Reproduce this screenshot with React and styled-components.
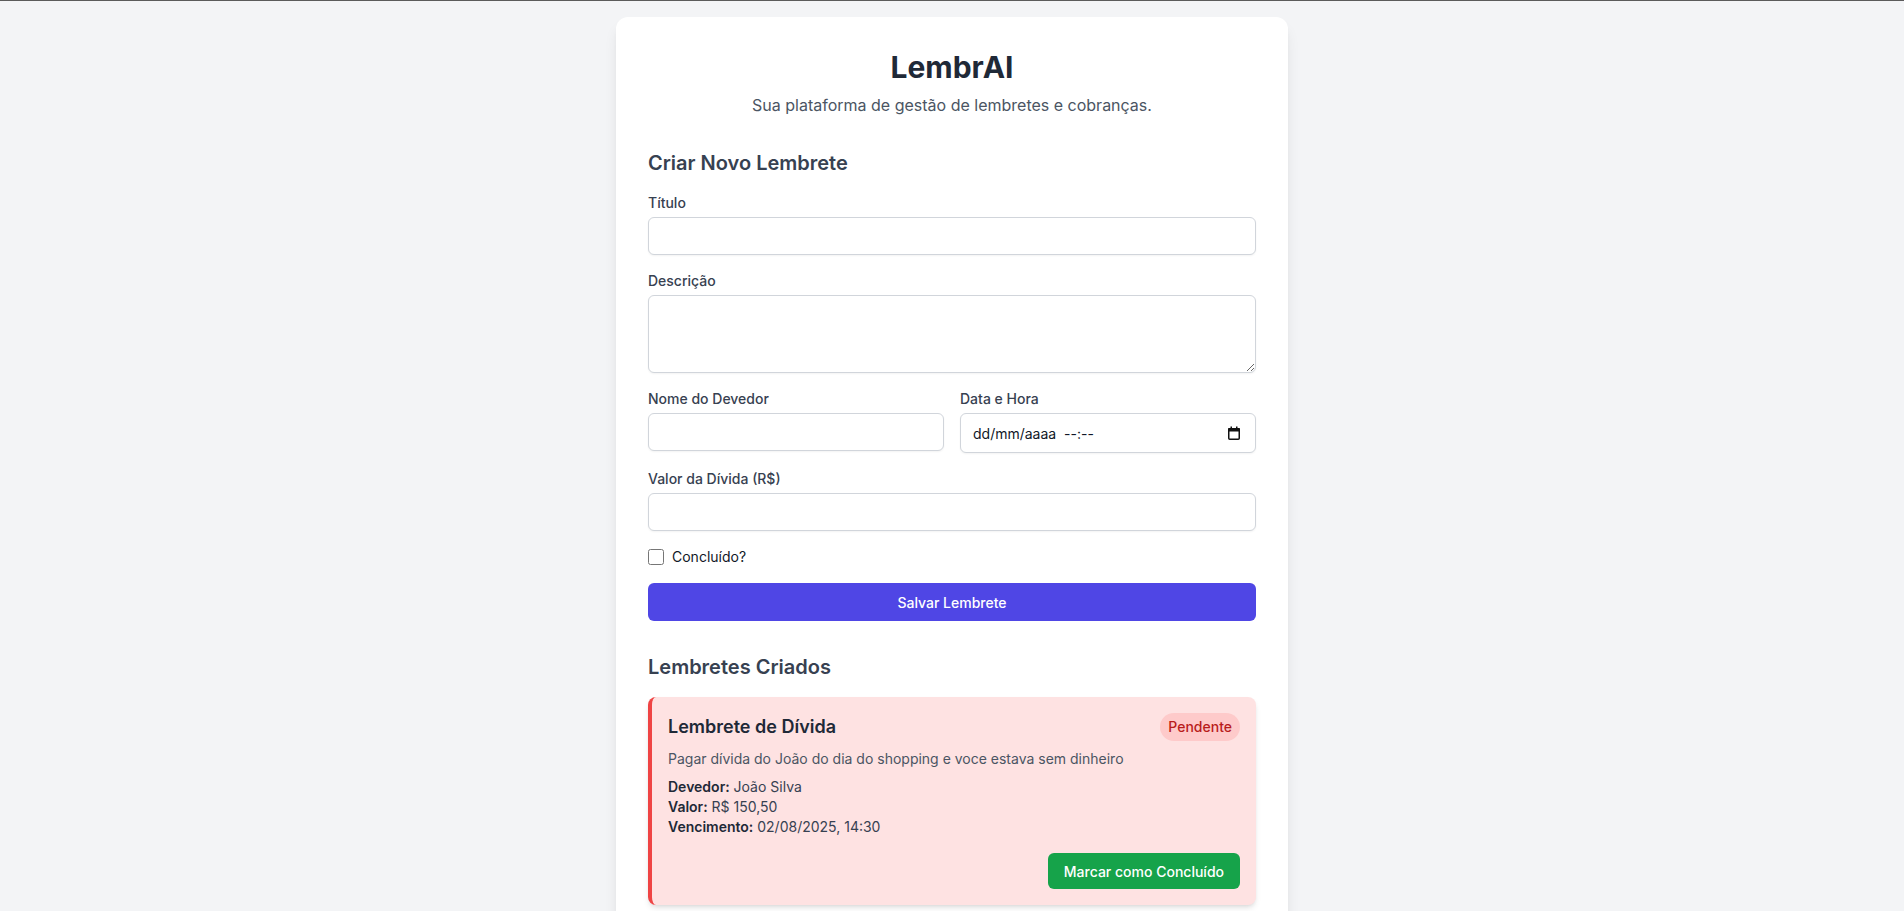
import { useState } from "react";
import styled, { createGlobalStyle } from "styled-components";

const GlobalStyle = createGlobalStyle`
  * {
    box-sizing: border-box;
  }
  body {
    margin: 0;
    background-color: #f3f4f6;
    border-top: 1px solid #5b5b5b;
    font-family: Inter, "Noto Sans", sans-serif;
    color: #1f2937;
  }
`;

const Page = styled.div`
  min-height: 910px;
  padding: 16px 16px 32px;
`;

const Card = styled.main`
  max-width: 672px;
  margin: 0 auto;
  background-color: #ffffff;
  padding: 32px;
  border-radius: 12px;
  box-shadow: 0 10px 15px -3px rgba(0, 0, 0, 0.1),
    0 4px 6px -4px rgba(0, 0, 0, 0.1);
`;

const Header = styled.header`
  text-align: center;
  margin-bottom: 32px;
`;

const Title = styled.h1`
  margin: 0 0 8px;
  font-size: 30px;
  line-height: 36px;
  font-weight: 700;
  color: #1f2937;
`;

const Subtitle = styled.p`
  margin: 0;
  font-size: 16px;
  line-height: 24px;
  color: #4b5563;
`;

const SectionTitle = styled.h2`
  margin: 0 0 16px;
  font-size: 20px;
  line-height: 28px;
  font-weight: 600;
  color: #374151;
`;

const Form = styled.form`
  display: flex;
  flex-direction: column;
  gap: 16px;
  margin-bottom: 32px;
`;

const Field = styled.div`
  display: flex;
  flex-direction: column;
`;

const Label = styled.label`
  display: block;
  font-size: 14px;
  line-height: 20px;
  font-weight: 500;
  color: #374151;
  margin-bottom: 4px;
`;

const TwoCols = styled.div`
  display: grid;
  grid-template-columns: 1fr 1fr;
  gap: 16px;
  align-items: start;
`;

const Input = styled.input`
  width: 100%;
  height: ${(p) => (p.$tall ? "40px" : "38px")};
  padding: 8px 12px;
  font-family: inherit;
  font-size: 14px;
  line-height: 20px;
  color: #111827;
  background: #ffffff;
  border: 1px solid #d1d5db;
  border-radius: 6px;
  box-shadow: 0 1px 2px 0 rgba(0, 0, 0, 0.05);
  outline: none;
`;

const TextArea = styled.textarea`
  width: 100%;
  height: 78px;
  padding: 8px 12px;
  font-family: inherit;
  font-size: 14px;
  line-height: 20px;
  border: 1px solid #d1d5db;
  border-radius: 6px;
  box-shadow: 0 1px 2px 0 rgba(0, 0, 0, 0.05);
  outline: none;
  display: block;
`;

const DateWrap = styled.div`
  position: relative;
`;

const CalendarIcon = styled.svg`
  position: absolute;
  right: 16px;
  top: 13px;
  pointer-events: none;
`;

const CheckRow = styled.div`
  display: flex;
  align-items: center;
  height: 20px;
`;

const Checkbox = styled.input`
  width: 16px;
  height: 16px;
  margin: 0;
`;

const CheckLabel = styled.label`
  margin-left: 8px;
  font-size: 14px;
  line-height: 20px;
  color: #111827;
`;

const Button = styled.button`
  display: flex;
  justify-content: center;
  align-items: center;
  height: ${(p) => (p.$full ? "38px" : "36px")};
  width: ${(p) => (p.$full ? "100%" : "auto")};
  padding: 0 16px;
  border: none;
  border-radius: 6px;
  font-family: inherit;
  font-size: 14px;
  font-weight: 500;
  color: #ffffff;
  background-color: ${(p) => p.$color};
  cursor: pointer;
`;

const ReminderCard = styled.div`
  background-color: #fee2e2;
  border-left: 4px solid #ef4444;
  border-radius: 8px;
  padding: 16px;
  box-shadow: 0 4px 6px -1px rgba(0, 0, 0, 0.1),
    0 2px 4px -2px rgba(0, 0, 0, 0.1);
`;

const ReminderHead = styled.div`
  display: flex;
  justify-content: space-between;
  align-items: center;
`;

const ReminderTitle = styled.h3`
  margin: 0;
  font-size: 18px;
  line-height: 28px;
  font-weight: 600;
  color: #1f2937;
`;

const Badge = styled.span`
  padding: 4px 8px;
  border-radius: 9999px;
  font-size: 14px;
  line-height: 20px;
  font-weight: 500;
  background-color: #fecaca;
  color: #b91c1c;
`;

const Description = styled.p`
  margin: 8px 0 0;
  font-size: 14px;
  line-height: 20px;
  color: #4b5563;
`;

const Details = styled.div`
  margin-top: 8px;
  font-size: 14px;
  line-height: 20px;
  color: #374151;
`;

const DetailLine = styled.p`
  margin: 0;

  strong {
    font-weight: 600;
    color: #1f2937;
  }
`;

const Actions = styled.div`
  display: flex;
  justify-content: flex-end;
  margin-top: 16px;
`;

const App = () => {
  const [done, setDone] = useState(false);

  return (
    <>
      <GlobalStyle />
      <Page>
        <Card>
          <Header>
            <Title>LembrAI</Title>
            <Subtitle>Sua plataforma de gestão de lembretes e cobranças.</Subtitle>
          </Header>

          <SectionTitle>Criar Novo Lembrete</SectionTitle>
          <Form onSubmit={(e) => e.preventDefault()}>
            <Field>
              <Label htmlFor="titulo">Título</Label>
              <Input id="titulo" type="text" />
            </Field>
            <Field>
              <Label htmlFor="descricao">Descrição</Label>
              <TextArea id="descricao" rows="3" />
            </Field>
            <TwoCols>
              <Field>
                <Label htmlFor="devedor">Nome do Devedor</Label>
                <Input id="devedor" type="text" />
              </Field>
              <Field>
                <Label htmlFor="data">Data e Hora</Label>
                <DateWrap>
                  <Input id="data" type="text" $tall readOnly value="dd/mm/aaaa  --:--" />
                  <CalendarIcon width="12" height="14" viewBox="0 0 12 14">
                    <rect x="0.75" y="2.75" width="10.5" height="10.5" rx="1" fill="none" stroke="#111" strokeWidth="1.5" />
                    <rect x="0" y="2" width="12" height="3.5" rx="1" fill="#111" />
                    <rect x="2.5" y="0.5" width="1.5" height="2.5" fill="#111" />
                    <rect x="8" y="0.5" width="1.5" height="2.5" fill="#111" />
                  </CalendarIcon>
                </DateWrap>
              </Field>
            </TwoCols>
            <Field>
              <Label htmlFor="valor">Valor da Dívida (R$)</Label>
              <Input id="valor" type="text" />
            </Field>
            <CheckRow>
              <Checkbox
                id="concluido"
                type="checkbox"
                checked={done}
                onChange={(e) => setDone(e.target.checked)}
              />
              <CheckLabel htmlFor="concluido">Concluído?</CheckLabel>
            </CheckRow>
            <Button type="submit" $full $color="#4f46e5">
              Salvar Lembrete
            </Button>
          </Form>

          <SectionTitle>Lembretes Criados</SectionTitle>
          <ReminderCard>
            <ReminderHead>
              <ReminderTitle>Lembrete de Dívida</ReminderTitle>
              <Badge>Pendente</Badge>
            </ReminderHead>
            <Description>
              Pagar dívida do João do dia do shopping e voce estava sem dinheiro
            </Description>
            <Details>
              <DetailLine>
                <strong>Devedor:</strong> João Silva
              </DetailLine>
              <DetailLine>
                <strong>Valor:</strong> R$ 150,50
              </DetailLine>
              <DetailLine>
                <strong>Vencimento:</strong> 02/08/2025, 14:30
              </DetailLine>
            </Details>
            <Actions>
              <Button type="button" $color="#16a34a">
                Marcar como Concluído
              </Button>
            </Actions>
          </ReminderCard>
        </Card>
      </Page>
    </>
  );
};

export default App;
